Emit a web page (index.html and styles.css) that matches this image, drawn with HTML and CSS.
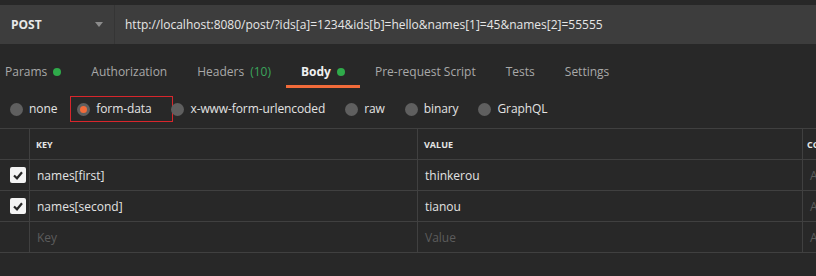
FILE: index.html
```html
<!DOCTYPE html>
<html>
<head>
    <meta charset="utf-8" />
    <link rel="stylesheet" href="styles.css">
</head>
<body>
    <div class="url-bar">
        <div class="method">
            <span>POST</span>
            <span class="caret"></span>
        </div>
        <div class="url">http://localhost:8080/post/?ids[a]=1234&amp;ids[b]=hello&amp;names[1]=45&amp;names[2]=55555</div>
    </div>

    <div class="tabs">
        <div class="tab tab-first">Params <span class="dot"></span></div>
        <div class="tab">Authorization</div>
        <div class="tab">Headers <span class="count">(10)</span></div>
        <div class="tab active">Body <span class="dot"></span></div>
        <div class="tab">Pre-request Script</div>
        <div class="tab">Tests</div>
        <div class="tab">Settings</div>
    </div>

    <div class="body-types">
        <label class="radio"><span class="circle"></span>none</label>
        <label class="radio checked marked"><span class="circle"></span>form-data</label>
        <label class="radio"><span class="circle"></span>x-www-form-urlencoded</label>
        <label class="radio"><span class="circle"></span>raw</label>
        <label class="radio"><span class="circle"></span>binary</label>
        <label class="radio"><span class="circle"></span>GraphQL</label>
    </div>

    <table class="params">
        <tr class="head">
            <th class="col-check"></th>
            <th class="col-key">Key</th>
            <th class="col-value">Value</th>
            <th class="col-desc">Content</th>
        </tr>
        <tr>
            <td class="col-check"><span class="checkbox"><svg width="16" height="16" viewBox="0 0 16 16"><polyline points="4,8.5 7,11.3 12,5.2" fill="none" stroke="#262626" stroke-width="2.2" /></svg></span></td>
            <td>names[first]</td>
            <td>thinkerou</td>
            <td class="placeholder">Auto</td>
        </tr>
        <tr>
            <td class="col-check"><span class="checkbox"><svg width="16" height="16" viewBox="0 0 16 16"><polyline points="4,8.5 7,11.3 12,5.2" fill="none" stroke="#262626" stroke-width="2.2" /></svg></span></td>
            <td>names[second]</td>
            <td>tianou</td>
            <td class="placeholder">Auto</td>
        </tr>
        <tr>
            <td class="col-check"></td>
            <td class="placeholder">Key</td>
            <td class="placeholder">Value</td>
            <td class="placeholder">Auto</td>
        </tr>
    </table>
</body>
</html>
```

FILE: styles.css
```css
body {
    margin: 0;
    background-color: #282828;
    font-family: "Open Sans", "Liberation Sans", sans-serif;
    font-size: 12px;
    color: #e3e3e3;
    overflow: hidden;
}

.url-bar {
    display: flex;
    margin-top: 5px;
    height: 39px;
    background-color: #3d3d3d;
}

.method {
    display: flex;
    align-items: center;
    justify-content: space-between;
    width: 115px;
    box-sizing: border-box;
    padding: 0 11px 0 11px;
    border-right: 1px solid #353535;
    font-weight: bold;
    color: #e8e8e8;
}

.caret {
    width: 0;
    height: 0;
    border-left: 4px solid transparent;
    border-right: 4px solid transparent;
    border-top: 5px solid #8c8c8c;
}

.url {
    display: flex;
    align-items: center;
    padding-left: 10px;
    color: #e6e6e6;
}

.tabs {
    display: flex;
}

.tab {
    display: flex;
    align-items: center;
    gap: 6px;
    padding: 20px 15px 5px;
    line-height: 16px;
    color: #a9a9a9;
    border-bottom: 3px solid transparent;
}

.tab-first {
    margin-left: -10px;
}

.tab.active {
    color: #f0f0f0;
    font-weight: bold;
    border-bottom-color: #f26b3a;
}

.tab .count {
    color: #3ba55c;
}

.dot {
    width: 8px;
    height: 8px;
    border-radius: 50%;
    background-color: #2faa4a;
}

.body-types {
    display: flex;
    gap: 20px;
    padding: 12px 0 10px 10px;
    letter-spacing: -0.1px;
}

.radio {
    position: relative;
    display: flex;
    align-items: center;
    gap: 6px;
    line-height: 18px;
    color: #e3e3e3;
}

.circle {
    width: 13px;
    height: 13px;
    border-radius: 50%;
    background-color: #5f5f5f;
    display: flex;
    align-items: center;
    justify-content: center;
}

.radio.checked .circle::before {
    content: "";
    width: 7px;
    height: 7px;
    border-radius: 50%;
    background-color: #f26b3a;
}

.radio.marked::after {
    content: "";
    position: absolute;
    left: -7px;
    right: -22px;
    top: -4px;
    bottom: -4px;
    border: 1px solid #d8262c;
}

.params {
    border-collapse: collapse;
    width: 900px;
    table-layout: fixed;
}

.params th,
.params td {
    height: 30px;
    padding: 0 0 0 7px;
    border: 1px solid #404040;
    text-align: left;
    white-space: nowrap;
    overflow: hidden;
}

.params tr > :first-child {
    border-left: none;
}

.params th {
    font-size: 9px;
    font-weight: bold;
    text-transform: uppercase;
    color: #e6e6e6;
    padding-left: 6px;
}

.params .col-check {
    width: 19px;
    padding-left: 10px;
}

.params .col-key {
    width: 381px;
}

.params .col-value {
    width: 378px;
}

.params .col-desc {
    padding-left: 4px;
}

.params td.placeholder {
    color: #5c5c5c;
}

.checkbox {
    display: flex;
    width: 16px;
    height: 16px;
    border-radius: 2px;
    background-color: #f4f4f4;
}
```
